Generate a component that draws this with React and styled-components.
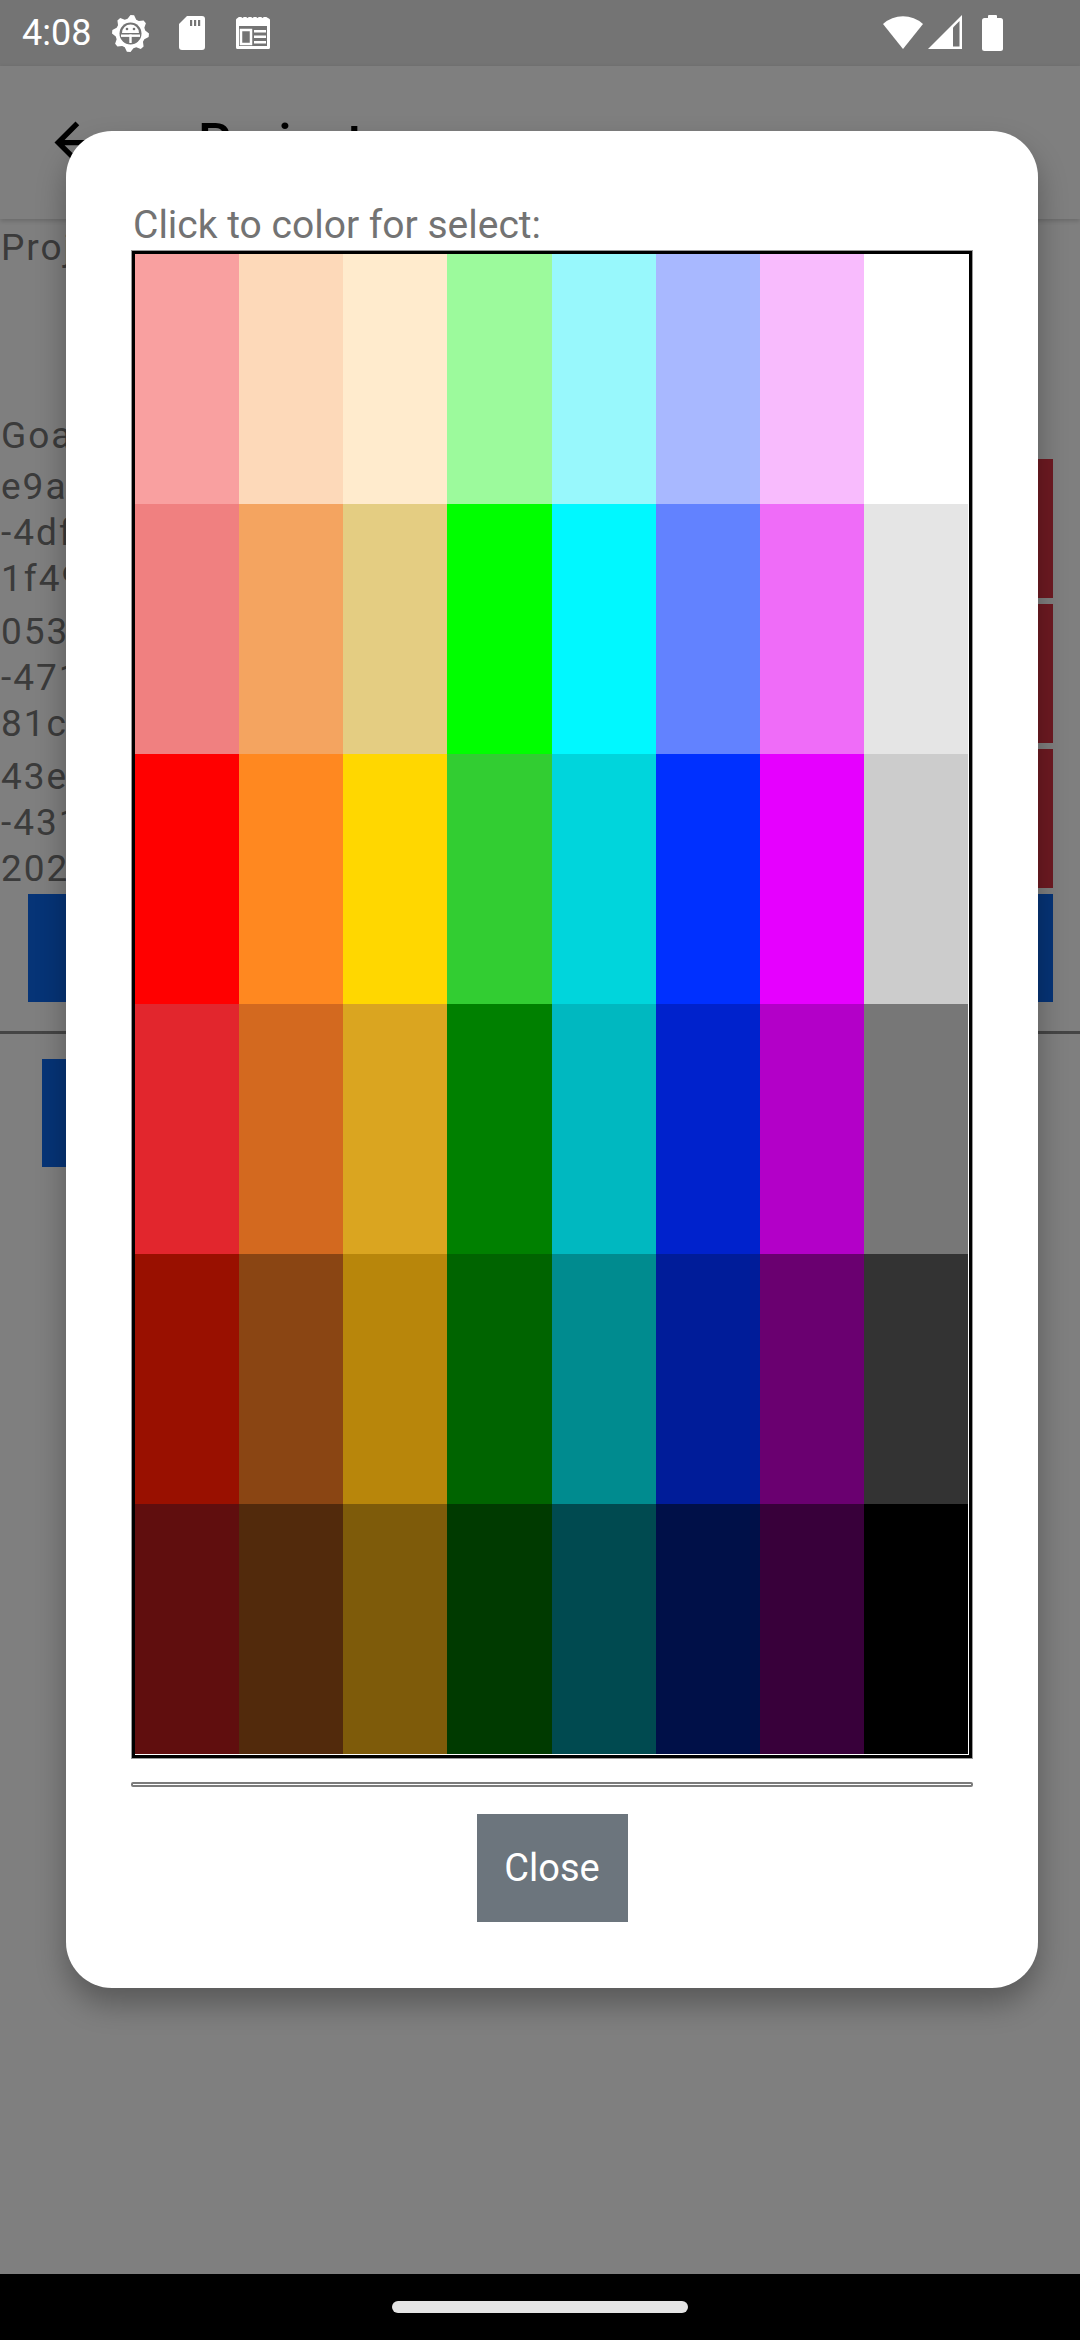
import styled, { createGlobalStyle } from 'styled-components';

const PALETTE = [
  ['#f9a0a0', '#fdd9b9', '#ffebcd', '#9cfa9c', '#98f8fc', '#a8b8ff', '#f8bbfd', '#ffffff'],
  ['#f08080', '#f4a460', '#e4cd82', '#00ff00', '#00f8ff', '#6282ff', '#ef6cf8', '#e5e5e5'],
  ['#ff0000', '#ff8820', '#ffd700', '#32cd32', '#00d5dc', '#0030ff', '#e600ff', '#cccccc'],
  ['#e2262d', '#d3691f', '#daa520', '#008000', '#00b8c0', '#0022cc', '#b300c8', '#777777'],
  ['#991000', '#8a4513', '#b8860b', '#006400', '#008b8f', '#001c99', '#6a0070', '#333333'],
  ['#600e0e', '#522a0c', '#7e5b0a', '#003a00', '#004a50', '#001048', '#38003a', '#000000'],
];

const GOALS = [
  ['e9a7c3b1', '-4dfe-4b2a-8c6d-', '1f49d2e0a7b3'],
  ['053b8e21', '-4719-4c3e-a5d2-', '81c6f0e4b9a2'],
  ['43e6a9d0', '-431b-4f8e-9b07-', '2024c5e1d8f3'],
];

const GlobalStyle = createGlobalStyle`
  html, body {
    margin: 0;
    padding: 0;
    background: #000;
  }
  * {
    box-sizing: border-box;
  }
`;

const Screen = styled.div`
  display: flex;
  flex-direction: column;
  width: 1080px;
  height: 2340px;
  overflow: hidden;
  font-family: Roboto, 'Noto Sans', sans-serif;
`;

const StatusBar = styled.div`
  display: flex;
  align-items: center;
  justify-content: space-between;
  height: 66px;
  padding: 0 77px 0 22px;
  background-color: #747474;
  color: #fff;
`;

const StatusLeft = styled.div`
  display: flex;
  align-items: center;
`;

const Clock = styled.span`
  font-size: 36px;
  line-height: 66px;
  margin-right: 21px;
`;

const StatusIcon = styled.svg`
  display: block;
  margin-right: ${(p) => p.$gap || 0}px;
`;

const StatusRight = styled.div`
  display: flex;
  align-items: flex-start;
  height: 36px;
`;

const Stage = styled.div`
  position: relative;
  flex: 1;
`;

const Page = styled.div`
  display: flex;
  flex-direction: column;
  height: 100%;
  background-color: #fff;
`;

const AppBar = styled.div`
  display: flex;
  align-items: center;
  height: 153px;
  padding-left: 44px;
  background-color: #fff;
  box-shadow: 0 2px 5px rgba(0, 0, 0, 0.18);
  position: relative;
  z-index: 1;
`;

const Title = styled.span`
  margin-left: 91px;
  font-size: 52px;
  font-weight: 500;
  color: #000;
`;

const Content = styled.div`
  display: flex;
  flex-direction: column;
  padding: 6px 27px 0 0;
`;

const TextLine = styled.div`
  padding-left: 1px;
  font-size: 37px;
  line-height: 46px;
  color: #767676;
  letter-spacing: 2px;
  white-space: nowrap;
  margin-top: ${(p) => p.$top || 0}px;
`;

const GoalRow = styled.div`
  display: flex;
  justify-content: space-between;
  height: 139px;
  margin-bottom: 6px;
`;

const GoalId = styled.div`
  padding-top: 5px;
`;

const DangerButton = styled.div`
  width: 180px;
  height: 139px;
  background-color: #dc3545;
`;

const ButtonRow = styled.div`
  display: flex;
  justify-content: space-between;
  height: 108px;
  padding-left: 28px;
`;

const PrimaryButton = styled.div`
  width: ${(p) => p.$w}px;
  height: 108px;
  margin-left: ${(p) => p.$left || 0}px;
  margin-top: ${(p) => p.$top || 0}px;
  background-color: #0c68ee;
`;

const Divider = styled.div`
  height: 3px;
  margin: 29px -27px 0 0;
  background-color: #8a8a8a;
`;

const Scrim = styled.div`
  position: absolute;
  inset: 0;
  z-index: 2;
  display: flex;
  align-items: flex-start;
  padding: 65px 0 0 66px;
  background-color: rgba(0, 0, 0, 0.5);
`;

const Dialog = styled.div`
  display: flex;
  flex-direction: column;
  align-items: center;
  width: 972px;
  padding: 74px 66px 66px 66px;
  border-radius: 46px;
  background-color: #fff;
  box-shadow: 0 16px 30px rgba(0, 0, 0, 0.3);
`;

const Prompt = styled.div`
  align-self: stretch;
  height: 42px;
  margin-bottom: 4px;
  padding-left: 1px;
  font-size: 39px;
  line-height: 40px;
  color: #737373;
  white-space: nowrap;
`;

const Palette = styled.div`
  display: grid;
  grid-template-columns: repeat(8, 1fr);
  grid-template-rows: repeat(6, 250px);
  width: 840px;
  border: 3px solid #000;
  padding: 0 1px 1px 0;
  background-color: #fff;
  box-shadow: 0 0 0 1px #9a9a9a;
`;

const Swatch = styled.div`
  background-color: ${(p) => p.$color};
  cursor: pointer;
`;

const Rule = styled.div`
  width: 842px;
  height: 5px;
  margin-top: 24px;
  border: 2px solid #7b7b7b;
  border-radius: 2px;
  background-color: #fff;
`;

const CloseButton = styled.button`
  width: 151px;
  height: 108px;
  margin-top: 27px;
  border: none;
  border-radius: 0;
  background-color: #6c757d;
  color: #fff;
  font-family: Roboto, 'Noto Sans', sans-serif;
  font-size: 38px;
  cursor: pointer;
`;

const NavBar = styled.div`
  display: flex;
  justify-content: center;
  height: 66px;
  padding-top: 27px;
  background-color: #000;
`;

const HomePill = styled.div`
  width: 296px;
  height: 12px;
  border-radius: 6px;
  background-color: #e4e4e4;
`;

const gearPoints = () => {
  const pts = [];
  const teeth = 8;
  for (let i = 0; i < teeth * 4; i++) {
    const a = (i / (teeth * 4)) * Math.PI * 2 - Math.PI / 2;
    const r = i % 4 === 0 || i % 4 === 1 ? 18.5 : 15;
    pts.push(`${(18.5 + r * Math.cos(a)).toFixed(2)},${(19.5 + r * Math.sin(a)).toFixed(2)}`);
  }
  return pts.join(' ');
};

const DebugIcon = () => (
  <StatusIcon width="37" height="39" viewBox="0 0 37 39" $gap={30}>
    <polygon points={gearPoints()} fill="#fff" />
    <circle cx="18.5" cy="19.5" r="11" fill="#747474" />
    <path d="M10 19 A8.5 8.5 0 0 1 27 19 Z" fill="#fff" />
    <circle cx="15" cy="15" r="1.3" fill="#747474" />
    <circle cx="22" cy="15" r="1.3" fill="#747474" />
    <rect x="9" y="20.5" width="19" height="2.4" fill="#fff" />
    <rect x="17.3" y="20.5" width="2.4" height="8.5" fill="#fff" />
  </StatusIcon>
);

const SdIcon = () => (
  <StatusIcon width="26" height="34" viewBox="0 0 26 34" $gap={31}>
    <path d="M8 0 H23 A3 3 0 0 1 26 3 V31 A3 3 0 0 1 23 34 H3 A3 3 0 0 1 0 31 V8 Z" fill="#fff" />
    <rect x="11" y="4" width="2.2" height="6" fill="#747474" />
    <rect x="15" y="4" width="2.2" height="6" fill="#747474" />
    <rect x="19" y="4" width="2.2" height="6" fill="#747474" />
  </StatusIcon>
);

const NewsIcon = () => (
  <StatusIcon width="34" height="32" viewBox="0 0 34 32">
    <path
      d="M1.5 3 L4 1 L6.5 3 L9 1 L11.5 3 L14 1 L16.5 3 L19 1 L21.5 3 L24 1 L26.5 3 L29 1 L32.5 3 V30.5 H1.5 Z"
      fill="none"
      stroke="#fff"
      strokeWidth="3"
      strokeLinejoin="round"
    />
    <rect x="1.5" y="3" width="31" height="6" fill="#fff" />
    <rect x="5" y="13" width="10" height="14" fill="none" stroke="#fff" strokeWidth="2.5" />
    <rect x="18" y="13" width="12" height="2.5" fill="#fff" />
    <rect x="18" y="18.5" width="12" height="2.5" fill="#fff" />
    <rect x="18" y="24" width="12" height="2.5" fill="#fff" />
  </StatusIcon>
);

const WifiIcon = () => (
  <StatusIcon width="40" height="34" viewBox="0 0 40 34" $gap={5}>
    <path d="M0 9 A30 30 0 0 1 40 9 L20 34 Z" fill="#fff" />
  </StatusIcon>
);

const SignalIcon = () => (
  <StatusIcon width="34" height="34" viewBox="0 0 34 34" $gap={20}>
    <polygon points="0,34 34,0 34,34" fill="#fff" />
    <polygon points="25,31.5 31.5,31.5 31.5,6 25,12.5" fill="#747474" />
  </StatusIcon>
);

const BatteryIcon = () => (
  <StatusIcon width="21" height="36" viewBox="0 0 21 36">
    <rect x="6" y="0" width="9" height="5" rx="1" fill="#fff" />
    <rect x="0" y="3" width="21" height="33" rx="2.5" fill="#fff" />
  </StatusIcon>
);

const BackArrow = () => (
  <svg width="63" height="63" viewBox="0 0 24 24">
    <path d="M20 11H7.83l5.59-5.59L12 4l-8 8 8 8 1.41-1.41L7.83 13H20v-2z" fill="#000" />
  </svg>
);

const App = () => {
  return (
    <>
      <GlobalStyle />
      <Screen>
        <StatusBar>
          <StatusLeft>
            <Clock>4:08</Clock>
            <DebugIcon />
            <SdIcon />
            <NewsIcon />
          </StatusLeft>
          <StatusRight>
            <WifiIcon />
            <SignalIcon />
            <BatteryIcon />
          </StatusRight>
        </StatusBar>

        <Stage>
          <Page>
            <AppBar>
              <BackArrow />
              <Title>Project</Title>
            </AppBar>

            <Content>
              <TextLine>Project name</TextLine>
              <TextLine $top={142}>Goals</TextLine>

              {GOALS.map((lines) => (
                <GoalRow key={lines[0]}>
                  <GoalId>
                    {lines.map((line) => (
                      <TextLine key={line}>{line}</TextLine>
                    ))}
                  </GoalId>
                  <DangerButton />
                </GoalRow>
              ))}

              <ButtonRow>
                <PrimaryButton $w={260} />
                <PrimaryButton $w={200} />
              </ButtonRow>

              <Divider />

              <PrimaryButton $w={300} $left={42} $top={25} />
            </Content>
          </Page>

          <Scrim>
            <Dialog>
              <Prompt>Click to color for select:</Prompt>
              <Palette>
                {PALETTE.flat().map((color, i) => (
                  <Swatch key={i} $color={color} />
                ))}
              </Palette>
              <Rule />
              <CloseButton>Close</CloseButton>
            </Dialog>
          </Scrim>
        </Stage>

        <NavBar>
          <HomePill />
        </NavBar>
      </Screen>
    </>
  );
};

export default App;
